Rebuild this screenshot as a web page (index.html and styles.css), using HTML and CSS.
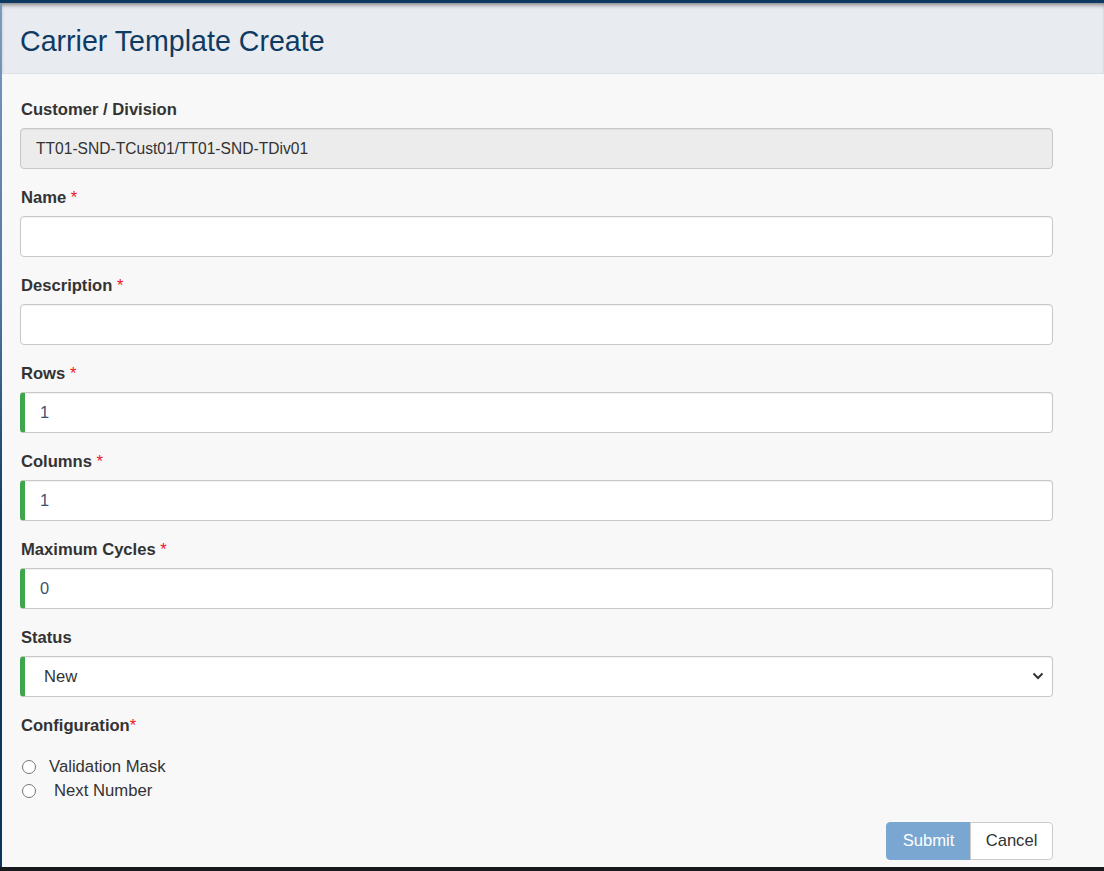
FILE: index.html
```html
<!DOCTYPE html>
<html>
<head>
<meta charset="utf-8">
<title>Carrier Template Create</title>
<link rel="stylesheet" href="styles.css">
</head>
<body>
<div class="modal">
  <div class="modal-header">
    <h1 class="modal-title">Carrier Template Create</h1>
  </div>
  <form class="modal-body">
    <div class="group">
      <label class="lbl">Customer / Division</label>
      <input class="ctl readonly" type="text" value="TT01-SND-TCust01/TT01-SND-TDiv01" readonly>
    </div>
    <div class="group">
      <label class="lbl">Name <span class="req">*</span></label>
      <input class="ctl" type="text">
    </div>
    <div class="group">
      <label class="lbl">Description <span class="req">*</span></label>
      <input class="ctl" type="text">
    </div>
    <div class="group">
      <label class="lbl">Rows <span class="req">*</span></label>
      <input class="ctl valid" type="text" value="1">
    </div>
    <div class="group">
      <label class="lbl">Columns <span class="req">*</span></label>
      <input class="ctl valid" type="text" value="1">
    </div>
    <div class="group">
      <label class="lbl">Maximum Cycles <span class="req">*</span></label>
      <input class="ctl valid" type="text" value="0">
    </div>
    <div class="group">
      <label class="lbl">Status</label>
      <div class="select-wrap">
        <select class="ctl valid sel">
          <option>New</option>
        </select>
        <svg class="chev" width="12" height="8" viewBox="0 0 12 8"><path d="M1.5 1.5 L6 6 L10.5 1.5" fill="none" stroke="#333" stroke-width="2"/></svg>
      </div>
    </div>
    <div class="config">
      <label class="lbl">Configuration<span class="req">*</span></label>
      <div class="radios">
        <label class="radio"><input type="radio" name="cfg"><span class="rtext">Validation Mask</span></label>
        <label class="radio"><input type="radio" name="cfg"><span class="rtext nn">Next Number</span></label>
      </div>
    </div>
    <div class="actions">
      <button type="button" class="btn btn-primary">Submit</button>
      <button type="button" class="btn btn-default">Cancel</button>
    </div>
  </form>
</div>
</body>
</html>
```

FILE: styles.css
```css
html, body {
  margin: 0;
  padding: 0;
}
body {
  width: 1104px;
  height: 871px;
  overflow: hidden;
  background:
    linear-gradient(to bottom, #7c9dc1 0, #4f77a3 300px, #0d3a63 520px, #0b355c 867px, #17191c 867px);
  font-family: "Liberation Sans", Arial, sans-serif;
}
.modal {
  margin: 3px 0 0 2px;
  height: 864px;
  background: #f8f8f8;
  display: flex;
  flex-direction: column;
  position: relative;
}
.modal::before {
  content: "";
  position: absolute;
  left: -2px;
  right: 0;
  top: -3px;
  height: 3px;
  background: #0e3960;
}
.modal-header {
  height: 70px;
  background: #e8ebf0;
  border-bottom: 1px solid #dde0e5;
  box-shadow: inset 0 4px 4px -2px rgba(0,0,0,0.45);
  display: flex;
  align-items: center;
  padding-left: 18px;
}
.modal-title {
  margin: 0;
  font-weight: normal;
  font-size: 28.6px;
  color: #0f3b63;
  padding-top: 7px;
}
.modal-body {
  padding: 26px 51px 0 18px;
  display: flex;
  flex-direction: column;
}
.group {
  display: flex;
  flex-direction: column;
  margin-bottom: 19px;
}
.lbl {
  font-weight: bold;
  font-size: 16.6px;
  line-height: 20px;
  color: #333;
  margin-bottom: 8px;
  padding-left: 1px;
}
.req {
  color: #f0141e;
  font-weight: normal;
}
.ctl {
  box-sizing: border-box;
  height: 41px;
  width: 100%;
  border: 1px solid #c8c8c8;
  border-radius: 4px;
  background: #fff;
  font-family: "Liberation Sans", Arial, sans-serif;
  font-size: 16.4px;
  color: #555;
  padding: 0 15px;
  box-shadow: inset 0 1px 1px rgba(0,0,0,0.06);
  outline: none;
}
.readonly {
  background: #ececec;
  color: #333;
  font-size: 15.6px;
}
.valid {
  border-left: 5px solid #3fa64b;
  padding-left: 15px;
  color: #3f5170;
}
.select-wrap {
  position: relative;
}
.sel {
  appearance: none;
  -webkit-appearance: none;
  padding-left: 19px;
  color: #333;
  font-size: 16.6px;
}
.chev {
  position: absolute;
  right: 9px;
  top: 16px;
  pointer-events: none;
}
.config .lbl {
  display: block;
  margin-bottom: 0;
}
.radios {
  display: flex;
  flex-direction: column;
  margin-top: 19px;
}
.radio {
  display: flex;
  align-items: center;
  height: 24px;
  font-size: 16.7px;
  color: #333;
  padding-left: 2px;
}
.radio input {
  appearance: none;
  -webkit-appearance: none;
  margin: 0;
  width: 14px;
  height: 14px;
  border: 1px solid #767676;
  border-radius: 50%;
  background: #fff;
  box-sizing: border-box;
}
.rtext {
  margin-left: 13px;
}
.rtext.nn {
  margin-left: 18px;
}
.actions {
  display: flex;
  justify-content: flex-end;
  margin-top: 19px;
}
.btn {
  height: 38px;
  font-family: "Liberation Sans", Arial, sans-serif;
  font-size: 16.6px;
  border-radius: 4px;
  padding: 0 12px;
  border: 1px solid transparent;
}
.btn-primary {
  width: 85px;
  background: #7aa7d1;
  border-color: #7aa7d1;
  color: #fff;
  border-top-right-radius: 0;
  border-bottom-right-radius: 0;
}
.btn-default {
  width: 83px;
  background: #fff;
  border-color: #ccc;
  color: #333;
  margin-left: -1px;
  border-top-left-radius: 0;
  border-bottom-left-radius: 0;
}
```
